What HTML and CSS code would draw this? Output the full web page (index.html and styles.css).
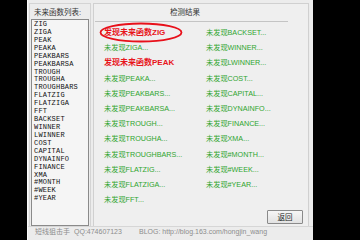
FILE: index.html
```html
<!DOCTYPE html>
<html>
<head>
<meta charset="utf-8">
<link rel="stylesheet" href="styles.css">
</head>
<body>
<div class="screen">
  <div class="dialog">
    <div class="main">
      <div class="left">
        <div class="label">未来函数列表:</div>
        <div class="list">
          <div>ZIG</div><div>ZIGA</div><div>PEAK</div><div>PEAKA</div><div>PEAKBARS</div><div>PEAKBARSA</div>
          <div>TROUGH</div><div>TROUGHA</div><div>TROUGHBARS</div><div>FLATZIG</div><div>FLATZIGA</div><div>FFT</div>
          <div>BACKSET</div><div>WINNER</div><div>LWINNER</div><div>COST</div><div>CAPITAL</div><div>DYNAINFO</div>
          <div>FINANCE</div><div>XMA</div><div>#MONTH</div><div>#WEEK</div><div>#YEAR</div>
        </div>
      </div>
      <div class="right">
        <div class="hdr"><span>检测结果</span></div>
        <div class="results">
          <div class="found">发现未来函数ZIG</div>
          <div class="ok">未发现ZIGA...</div>
          <div class="found">发现未来函数PEAK</div>
          <div class="ok">未发现PEAKA...</div>
          <div class="ok">未发现PEAKBARS...</div>
          <div class="ok">未发现PEAKBARSA...</div>
          <div class="ok">未发现TROUGH...</div>
          <div class="ok">未发现TROUGHA...</div>
          <div class="ok">未发现TROUGHBARS...</div>
          <div class="ok">未发现FLATZIG...</div>
          <div class="ok">未发现FLATZIGA...</div>
          <div class="ok">未发现FFT...</div>
          <div class="ok">未发现BACKSET...</div>
          <div class="ok">未发现WINNER...</div>
          <div class="ok">未发现LWINNER...</div>
          <div class="ok">未发现COST...</div>
          <div class="ok">未发现CAPITAL...</div>
          <div class="ok">未发现DYNAINFO...</div>
          <div class="ok">未发现FINANCE...</div>
          <div class="ok">未发现XMA...</div>
          <div class="ok">未发现#MONTH...</div>
          <div class="ok">未发现#WEEK...</div>
          <div class="ok">未发现#YEAR...</div>
        </div>
        <div class="btnrow"><button class="btn">返回</button></div>
        <svg class="mark" width="84" height="21" viewBox="0 0 84 21"><ellipse cx="42" cy="10.5" rx="40.5" ry="9" fill="none" stroke="#e8101a" stroke-width="1.8"/></svg>
      </div>
    </div>
    <div class="status">
      <span>短线狙击手</span>
      <span>QQ:474607123</span>
      <span>BLOG: http://blog.163.com/hongjin_wang</span>
    </div>
  </div>
</div>
</body>
</html>
```
FILE: styles.css
```css
* { box-sizing: border-box; }
html, body { margin: 0; padding: 0; background: #000; }
.screen { width: 360px; height: 240px; overflow: hidden; background: #000; }
.dialog {
  margin-left: 27px;
  width: 286px;
  height: 240px;
  background: #ececec;
  border-left: 1px solid #fafafa;
  display: flex;
  flex-direction: column;
  font-family: "Liberation Sans", "Noto Sans CJK SC", sans-serif;
}
.main {
  height: 226px;
  display: flex;
  padding: 3px 0 0 1px;
}
.left {
  width: 62px;
  border: 1px solid #d4d4d4;
  border-bottom: none;
  display: flex;
  flex-direction: column;
}
.label {
  margin: 4px 0 0 4px;
  height: 10px;
  line-height: 10px;
  font-size: 7.5px;
  color: #333;
  white-space: nowrap;
}
.list {
  margin: 1px 0 0 1px;
  width: 58px;
  flex: 1;
  border: 1px solid #8a8a8a;
  background: #f5f5f5;
  padding: 1px 0 0 2px;
  font-family: "Liberation Mono", monospace;
  font-size: 7px;
  letter-spacing: 0.2px;
  line-height: 7.92px;
  color: #111;
}
.right {
  position: relative;
  margin-left: 2px;
  width: 216px;
  border: 1px solid #d0d0d0;
  border-bottom: none;
  background: #efefef;
  display: flex;
  flex-direction: column;
}
.hdr {
  margin-left: 1px;
  width: 193px;
  height: 18px;
  line-height: 17px;
  border-bottom: 1px solid #c4c4c4;
  padding-left: 75px;
  font-size: 7.5px;
  color: #333;
}
.results {
  margin-top: 3px;
  padding-left: 10px;
  display: grid;
  grid-template-columns: 102px 102px;
  grid-template-rows: repeat(12, 15.2px);
  grid-auto-flow: column;
}
.results div { line-height: 15.2px; white-space: nowrap; }
.ok { color: #2ea52e; font-size: 7.2px; }
.found { color: #e8141b; font-size: 8px; font-weight: bold; }
.btnrow {
  margin-top: auto;
  display: flex;
  justify-content: flex-end;
  padding: 0 5px 2px 0;
}
.btn {
  width: 36px;
  height: 14px;
  padding: 0;
  border: 1px solid #8a8a8a;
  border-radius: 1px;
  background: linear-gradient(#f6f6f6, #e2e2e2);
  font-family: "Noto Sans CJK SC", sans-serif;
  font-size: 7.5px;
  line-height: 12px;
  color: #222;
}
.mark { position: absolute; left: 5px; top: 18px; }
.status {
  height: 14px;
  border-top: 1px solid #d6d6d6;
  display: grid;
  grid-template-columns: 39px 65px auto;
  padding-left: 7px;
  font-size: 7px;
  line-height: 10px;
  color: #8c8c8c;
  white-space: nowrap;
}
```
